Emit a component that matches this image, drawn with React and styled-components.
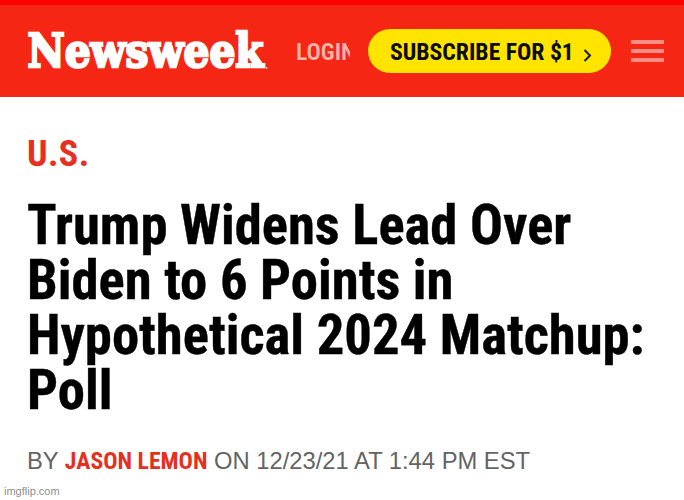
import React from 'react'
import styled, { createGlobalStyle } from 'styled-components'

const App = () => {
  return (
    <>
      <GlobalStyle />
      <Page>
        <Header>
          <Logo viewBox="0 0 242 44" role="img" aria-label="Newsweek">
            <text x="0.5" y="38" textLength="236" lengthAdjust="spacingAndGlyphs">
              Newsweek
            </text>
            <circle cx="239.6" cy="38.8" r="0.9" />
          </Logo>
          <Login>LOGIN</Login>
          <Subscribe>
            SUBSCRIBE FOR $1
            <Arrow viewBox="0 0 9 13">
              <path d="M1.5 1l5.5 5.5L1.5 12" />
            </Arrow>
          </Subscribe>
          <Menu aria-label="Menu">
            <Bar />
            <Bar />
            <Bar />
          </Menu>
        </Header>
        <Article>
          <Category>U.S.</Category>
          <Title>
            Trump Widens Lead Over Biden to 6 Points in Hypothetical 2024
            Matchup: Poll
          </Title>
          <Byline>
            BY <Author>JASON LEMON</Author> ON 12/23/21 AT 1:44 PM EST
          </Byline>
        </Article>
        <Watermark>imgflip.com</Watermark>
      </Page>
    </>
  )
}

export default App

const GlobalStyle = createGlobalStyle`
  * {
    box-sizing: border-box;
  }
  body {
    margin: 0;
    background: #fff;
  }
`
const Page = styled.div`
  display: flex;
  flex-direction: column;
  width: 684px;
  height: 500px;
  overflow: hidden;
  background: #fff;
  font-family: 'Roboto Condensed', Roboto, sans-serif;
  font-stretch: 75%;
`
const Header = styled.header`
  display: flex;
  align-items: center;
  height: 97px;
  padding: 0 20px 0 27px;
  border-top: 5px solid #fe0000;
  background: #f52614;
`
const Logo = styled.svg`
  width: 242px;
  height: 44px;
  flex-shrink: 0;
  overflow: visible;
  fill: #fff;
  text {
    font-family: 'DejaVu Serif', serif;
    font-size: 46px;
    font-weight: 700;
    font-stretch: normal;
    stroke: #fff;
    stroke-width: 2.6px;
  }
`
const Login = styled.div`
  width: 54px;
  margin: 2px 0 0 27px;
  overflow: hidden;
  color: #ffb3ab;
  font-size: 23.7px;
  font-weight: 600;
  line-height: 30px;
  white-space: nowrap;
`
const Subscribe = styled.button`
  display: flex;
  align-items: center;
  width: 243px;
  height: 44px;
  margin-left: 18px;
  padding: 2px 0 0 22px;
  flex-shrink: 0;
  border: 0;
  border-radius: 22px;
  background: #ffe400;
  color: #0c0c00;
  font: inherit;
  font-stretch: 75%;
  font-size: 23.7px;
  font-weight: 700;
  white-space: nowrap;
`
const Arrow = styled.svg`
  width: 9px;
  height: 13px;
  margin: 6px 0 0 9px;
  fill: none;
  stroke: #1c1c00;
  stroke-width: 2;
`
const Menu = styled.div`
  display: flex;
  flex-direction: column;
  gap: 5px;
  width: 33px;
  margin-left: 20px;
`
const Bar = styled.span`
  height: 4px;
  background: #ff8d84;
`
const Article = styled.main`
  padding: 36px 27px 0;
`
const Category = styled.div`
  height: 42px;
  color: #e92f1f;
  font-size: 36px;
  font-weight: 700;
  line-height: 42px;
  letter-spacing: 0.4px;
`
const Title = styled.h1`
  margin: 23px 0 0;
  color: #000;
  font-size: 54.65px;
  font-weight: 700;
  line-height: 55px;
  -webkit-text-stroke: 0.4px #000;
`
const Byline = styled.div`
  margin-top: 28px;
  color: #646464;
  font-family: 'Liberation Sans', sans-serif;
  font-size: 23.75px;
  line-height: 30px;
  white-space: nowrap;
`
const Author = styled.span`
  color: #e6301f;
  font-family: 'Roboto Condensed', Roboto, sans-serif;
  font-weight: 700;
`
const Watermark = styled.div`
  margin: auto 0 0 4px;
  color: #8f8f8f;
  font-family: 'Liberation Sans', sans-serif;
  font-size: 11px;
  line-height: 17px;
`
